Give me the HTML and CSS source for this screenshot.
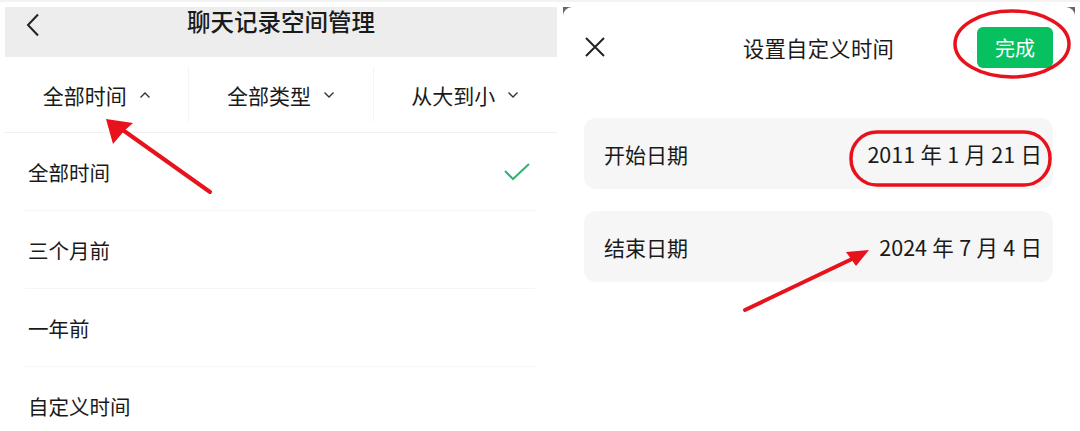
FILE: index.html
```html
<!DOCTYPE html>
<html lang="zh-CN">
<head>
<meta charset="UTF-8">
<title>聊天记录空间管理</title>
<link rel="stylesheet" href="styles.css">
</head>
<body>
<div class="page">
    <!-- 左侧：聊天记录空间管理 -->
    <div class="left">
        <div class="nav">
            <svg class="back" width="14" height="24" viewBox="0 0 14 24"><path d="M12 1.5 L2 12 L12 22.5" fill="none" stroke="#222" stroke-width="2"/></svg>
            <div class="nav-title">聊天记录空间管理</div>
        </div>
        <div class="tabs">
            <div class="tab">全部时间 <svg class="caret" width="12" height="8" viewBox="0 0 12 8"><path d="M1.5 6.5 L6 2 L10.5 6.5" fill="none" stroke="#333" stroke-width="1.4"/></svg></div>
            <div class="tab">全部类型 <svg class="caret" width="12" height="8" viewBox="0 0 12 8"><path d="M1.5 1.5 L6 6 L10.5 1.5" fill="none" stroke="#333" stroke-width="1.4"/></svg></div>
            <div class="tab">从大到小 <svg class="caret" width="12" height="8" viewBox="0 0 12 8"><path d="M1.5 1.5 L6 6 L10.5 1.5" fill="none" stroke="#333" stroke-width="1.4"/></svg></div>
        </div>
        <div class="list">
            <div class="item">全部时间
                <svg width="28" height="20" viewBox="0 0 28 20"><path d="M2 9 L10 17 L26 2" fill="none" stroke="#2bb673" stroke-width="2"/></svg>
            </div>
            <div class="item">三个月前</div>
            <div class="item">一年前</div>
            <div class="item">自定义时间</div>
        </div>
    </div>

    <!-- 右侧：设置自定义时间 -->
    <div class="right-frame">
        <div class="right">
            <div class="sheet-head">
                <svg width="22" height="22" viewBox="0 0 22 22"><path d="M2 2 L20 20 M20 2 L2 20" stroke="#222" stroke-width="2"/></svg>
                <div class="sheet-title">设置自定义时间</div>
                <button class="done">完成</button>
            </div>
            <div class="card"><span>开始日期</span><span class="date">2011 年 1 月 21 日</span></div>
            <div class="card"><span>结束日期</span><span class="date">2024 年 7 月 4 日</span></div>
        </div>
    </div>

    <!-- 红色标注 -->
    <svg class="marks" width="1080" height="431" viewBox="0 0 1080 431">
        <g stroke="#e8121c" stroke-width="4" stroke-linecap="round" fill="none">
            <line x1="210" y1="190" x2="120" y2="126"/>
            <line x1="745" y1="308" x2="852" y2="257"/>
            <ellipse cx="1012" cy="42" rx="57" ry="33" stroke-width="3.5"/>
            <rect x="851" y="130" width="199" height="53" rx="26" stroke-width="3.5"/>
        </g>
        <g fill="#e8121c">
            <polygon points="106,117 133,121 124,129 113,142"/>
            <polygon points="869,248 856,264 851,257 846,250"/>
        </g>
    </svg>
</div>
</body>
</html>
```

FILE: styles.css
```css
/* Général */
body, html {
    margin: 0;
    padding: 0;
    background-color: #fff;
    font-family: "Noto Sans CJK SC", "Noto Sans", sans-serif;
    color: #1a1a1a;
}

.page {
    position: relative;
    width: 1080px;
    height: 431px;
    overflow: hidden;
    display: flex;
    padding-top: 5px;
    box-sizing: border-box;
    border-top: 2px solid #f3f3f3;
}

/* Panneau gauche */
.left {
    width: 552px;
    margin-left: 5px;
}

.nav {
    position: relative;
    height: 50px;
    background-color: #ededed;
    display: flex;
    align-items: center;
    justify-content: center;
}

.back {
    position: absolute;
    left: 21px;
    top: 6px;
}

.nav-title {
    font-size: 23.5px;
    font-weight: 500;
    margin-top: -22px;
}

.tabs {
    display: flex;
    height: 71px;
    padding-bottom: 4px;
    border-bottom: 1px solid #f0f0f0;
}

.tab {
    flex: 1;
    display: flex;
    align-items: center;
    justify-content: center;
    gap: 12px;
    font-size: 21px;
    border-right: 1px solid #f5f5f5;
    margin: 10px 0 6px;
}

.tab:last-child {
    border-right: none;
}

.list {
    padding: 0 22px 0 20px;
}

.item {
    height: 77px;
    display: flex;
    align-items: center;
    justify-content: space-between;
    padding: 0 4px 0 3px;
    font-size: 20.5px;
    border-bottom: 1px solid #f6f6f6;
}

/* Panneau droit */
.right-frame {
    width: 512px;
    margin-left: 6px;
    background-color: #666;
    align-self: flex-start;
    height: 426px;
}

.right {
    height: 100%;
    background-color: #fff;
    border-radius: 9px 9px 0 0;
    padding: 0 22px 0 21px;
}

.sheet-head {
    position: relative;
    height: 80px;
    display: flex;
    align-items: center;
    justify-content: space-between;
    margin-bottom: 31px;
}

.sheet-title {
    position: absolute;
    left: 0;
    right: 0;
    text-align: center;
    font-size: 21.3px;
    letter-spacing: 0.3px;
    pointer-events: none;
}

.done {
    width: 76px;
    height: 41px;
    border: none;
    border-radius: 6px;
    background-color: #07c160;
    color: #fff;
    font-family: inherit;
    font-size: 20px;
    padding: 0;
}

.card {
    display: flex;
    align-items: center;
    justify-content: space-between;
    height: 71px;
    margin-bottom: 22px;
    padding: 0 11px 0 20px;
    background-color: #f6f6f6;
    border-radius: 12px;
    font-size: 21px;
}

.date {
    word-spacing: 0.5px;
    font-size: 21.5px;
}

/* Annotations */
.marks {
    position: absolute;
    left: 0;
    top: 0;
    pointer-events: none;
}
```
